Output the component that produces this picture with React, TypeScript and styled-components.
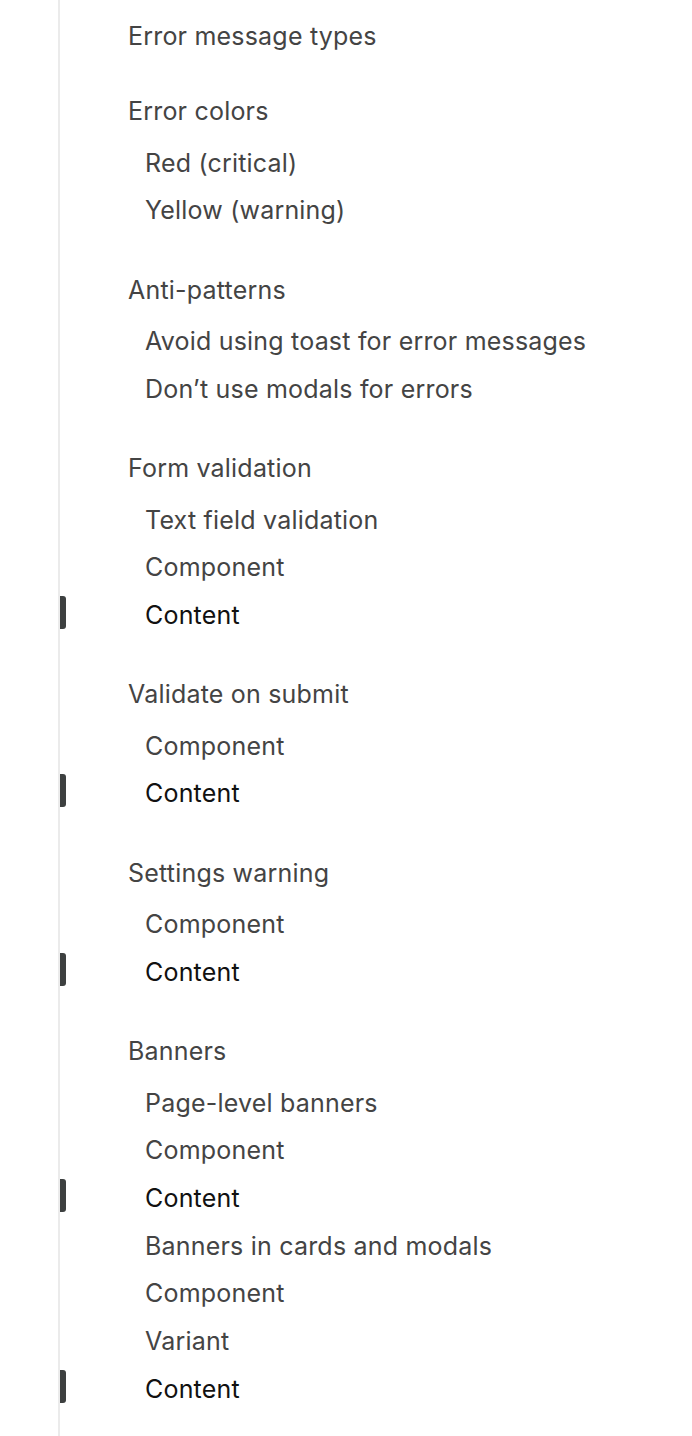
import styled, { createGlobalStyle } from "styled-components";

const GlobalStyle = createGlobalStyle`
  html, body {
    margin: 0;
    padding: 0;
    background: #fff;
  }
  body {
    font-family: Inter, "Noto Sans", sans-serif;
  }
`;

type Entry = { label: string; active?: boolean };
type Group = { title: string; items: Entry[] };

const groups: Group[] = [
  { title: "Error message types", items: [] },
  {
    title: "Error colors",
    items: [{ label: "Red (critical)" }, { label: "Yellow (warning)" }],
  },
  {
    title: "Anti-patterns",
    items: [
      { label: "Avoid using toast for error messages" },
      { label: "Don\u2019t use modals for errors" },
    ],
  },
  {
    title: "Form validation",
    items: [
      { label: "Text field validation" },
      { label: "Component" },
      { label: "Content", active: true },
    ],
  },
  {
    title: "Validate on submit",
    items: [{ label: "Component" }, { label: "Content", active: true }],
  },
  {
    title: "Settings warning",
    items: [{ label: "Component" }, { label: "Content", active: true }],
  },
  {
    title: "Banners",
    items: [
      { label: "Page-level banners" },
      { label: "Component" },
      { label: "Content", active: true },
      { label: "Banners in cards and modals" },
      { label: "Component" },
      { label: "Variant" },
      { label: "Content", active: true },
    ],
  },
];

export default function App() {
  return (
    <>
      <GlobalStyle />
      <Page>
        <Toc>
          {groups.map((g, i) => (
            <Section key={i}>
              <Title>{g.title}</Title>
              {g.items.length > 0 && (
                <ItemList>
                  {g.items.map((it, j) => (
                    <Item key={j} $active={!!it.active}>
                      {it.label}
                    </Item>
                  ))}
                </ItemList>
              )}
            </Section>
          ))}
        </Toc>
      </Page>
    </>
  );
}

const Page = styled.div`
  width: 692px;
  min-height: 1436px;
  padding-left: 58px;
  box-sizing: border-box;
  display: flex;
`;

const Toc = styled.nav`
  flex: 1;
  min-height: 1436px;
  border-left: 2px solid #ebebeb;
  padding-top: 11.5px;
  display: flex;
  flex-direction: column;
  gap: 27.6px;
`;

const Section = styled.div`
  display: flex;
  flex-direction: column;
`;

const Title = styled.div`
  height: 48px;
  line-height: 48px;
  padding-left: 68px;
  font-size: 25px;
  letter-spacing: 0.2px;
  color: #444;
  white-space: nowrap;
`;

const ItemList = styled.div`
  display: flex;
  flex-direction: column;
  padding: 4.5px 0 3px;
`;

const Item = styled.div<{ $active: boolean }>`
  position: relative;
  height: 47.7px;
  line-height: 47.7px;
  padding-left: 85px;
  font-size: 25px;
  letter-spacing: 0.2px;
  color: ${(p) => (p.$active ? "#111" : "#444")};
  white-space: nowrap;

  &::before {
    content: "";
    display: ${(p) => (p.$active ? "block" : "none")};
    position: absolute;
    left: 0;
    top: 4px;
    width: 6px;
    height: 33px;
    border-radius: 0 3px 3px 0;
    background: #3d4040;
  }
`;
